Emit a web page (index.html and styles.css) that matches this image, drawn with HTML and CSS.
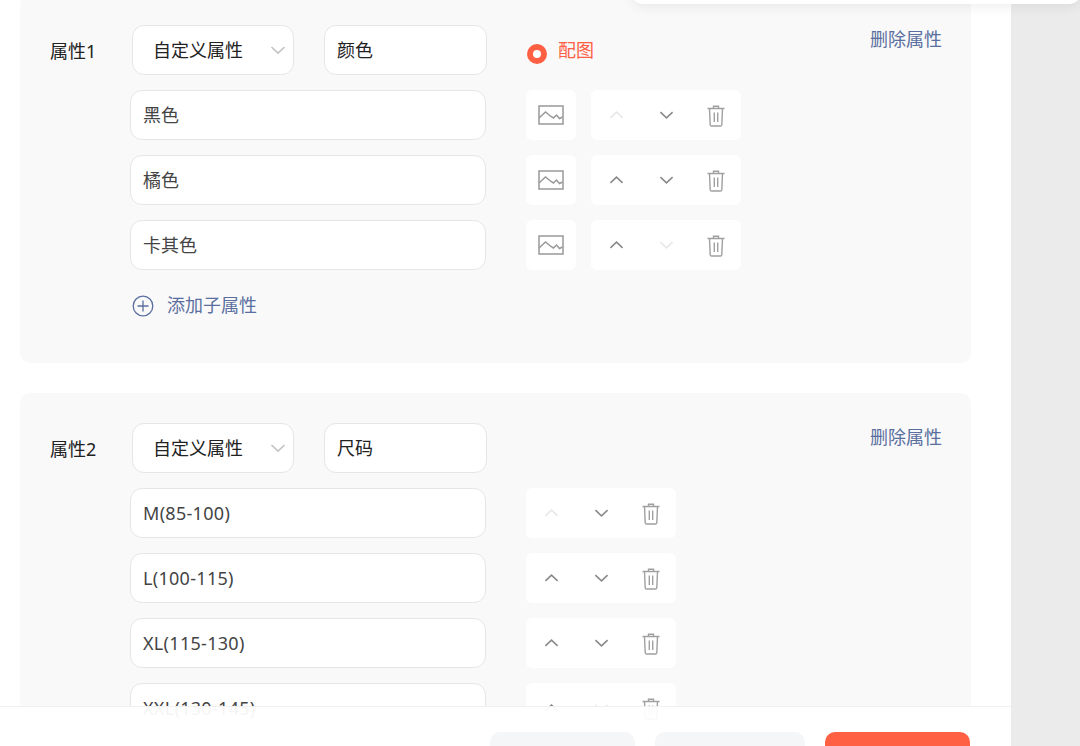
FILE: index.html
```html
<!DOCTYPE html>
<html lang="zh-CN">
<head>
<meta charset="utf-8">
<title>属性</title>
<link rel="stylesheet" href="styles.css">
</head>
<body>
<svg class="defs" width="0" height="0" aria-hidden="true">
  <symbol id="i-up" viewBox="0 0 16 10"><path d="M1.5 8 8 2l6.500 6" fill="none" stroke="currentColor" stroke-width="1.700"/></symbol>
  <symbol id="i-down" viewBox="0 0 16 10"><path d="M1.500 2 8 8l6.500-6" fill="none" stroke="currentColor" stroke-width="1.700"/></symbol>
  <symbol id="i-trash" viewBox="0 0 18 22"><path d="M.5 3.500h17M6.500 3.500V1.200h5v2.300M2.500 3.500l.7 16.200q.1 1.300 1.400 1.300h8.800q1.300 0 1.400-1.300l.7-16.200M7.300 7.500v9.500M10.700 7.500v9.500" fill="none" stroke="currentColor" stroke-width="1.400"/></symbol>
  <symbol id="i-img" viewBox="0 0 26 20"><rect x="1" y="1" width="24" height="18" fill="none" stroke="currentColor" stroke-width="1.500"/><path d="M1 13 7.500 7l5.500 4.500 2.500 1.500 3-3 3 3.500 3-1.500" fill="none" stroke="currentColor" stroke-width="1.500"/></symbol>
</svg>
<div class="app">
  <main class="main">
    <section class="card">
      <div class="head">
        <div class="label">属性1</div>
        <div class="select">自定义属性<svg class="caret"><use href="#i-down"/></svg></div>
        <div class="name">颜色</div>
        <div class="radio"><span class="dot"></span>配图</div>
        <a class="del">删除属性</a>
      </div>
      <div class="row">
        <div class="field">黑色</div>
        <div class="imgbtn"><svg class="ico-img"><use href="#i-img"/></svg></div>
        <div class="actions">
          <span class="act off"><svg class="chev"><use href="#i-up"/></svg></span>
          <span class="act"><svg class="chev"><use href="#i-down"/></svg></span>
          <span class="act tr"><svg class="trash"><use href="#i-trash"/></svg></span>
        </div>
      </div>
      <div class="row">
        <div class="field">橘色</div>
        <div class="imgbtn"><svg class="ico-img"><use href="#i-img"/></svg></div>
        <div class="actions">
          <span class="act"><svg class="chev"><use href="#i-up"/></svg></span>
          <span class="act"><svg class="chev"><use href="#i-down"/></svg></span>
          <span class="act tr"><svg class="trash"><use href="#i-trash"/></svg></span>
        </div>
      </div>
      <div class="row">
        <div class="field">卡其色</div>
        <div class="imgbtn"><svg class="ico-img"><use href="#i-img"/></svg></div>
        <div class="actions">
          <span class="act"><svg class="chev"><use href="#i-up"/></svg></span>
          <span class="act off"><svg class="chev"><use href="#i-down"/></svg></span>
          <span class="act tr"><svg class="trash"><use href="#i-trash"/></svg></span>
        </div>
      </div>
      <div class="add">
        <svg class="plus" viewBox="0 0 22 22"><circle cx="11" cy="11" r="9.800" fill="none" stroke="currentColor" stroke-width="1.300"/><path d="M5.500 11h11M11 5.500v11" fill="none" stroke="currentColor" stroke-width="1.300"/></svg>
        添加子属性
      </div>
    </section>
    <section class="card">
      <div class="head">
        <div class="label">属性2</div>
        <div class="select">自定义属性<svg class="caret"><use href="#i-down"/></svg></div>
        <div class="name">尺码</div>
        <a class="del">删除属性</a>
      </div>
      <div class="row">
        <div class="field latin">M(85-100)</div>
        <div class="actions">
          <span class="act off"><svg class="chev"><use href="#i-up"/></svg></span>
          <span class="act"><svg class="chev"><use href="#i-down"/></svg></span>
          <span class="act tr"><svg class="trash"><use href="#i-trash"/></svg></span>
        </div>
      </div>
      <div class="row">
        <div class="field latin">L(100-115)</div>
        <div class="actions">
          <span class="act"><svg class="chev"><use href="#i-up"/></svg></span>
          <span class="act"><svg class="chev"><use href="#i-down"/></svg></span>
          <span class="act tr"><svg class="trash"><use href="#i-trash"/></svg></span>
        </div>
      </div>
      <div class="row">
        <div class="field latin">XL(115-130)</div>
        <div class="actions">
          <span class="act"><svg class="chev"><use href="#i-up"/></svg></span>
          <span class="act"><svg class="chev"><use href="#i-down"/></svg></span>
          <span class="act tr"><svg class="trash"><use href="#i-trash"/></svg></span>
        </div>
      </div>
      <div class="row">
        <div class="field latin">XXL(130-145)</div>
        <div class="actions">
          <span class="act"><svg class="chev"><use href="#i-up"/></svg></span>
          <span class="act off"><svg class="chev"><use href="#i-down"/></svg></span>
          <span class="act tr"><svg class="trash"><use href="#i-trash"/></svg></span>
        </div>
      </div>
    </section>
    <footer class="footer">
      <span class="btn b1"></span>
      <span class="btn b2"></span>
      <span class="btn primary"></span>
    </footer>
  </main>
  <aside class="side"></aside>
  <div class="popup"></div>
</div>
</body>
</html>
```
FILE: styles.css
```css
* { box-sizing: border-box; }
html, body { margin: 0; height: 100%; overflow: hidden; background: #fff; }
body { font-family: "Noto Sans", "Noto Sans CJK SC", sans-serif; font-size: 18px; color: #333; }
.defs { position: absolute; }
.app { display: flex; height: 746px; overflow: hidden; }
.main { position: relative; width: 1011px; height: 746px; overflow: hidden; padding-left: 20px; flex: none; }
.side { flex: 1; background: #ebebeb; }
.popup { position: absolute; left: 632px; right: 0; top: -40px; height: 44px; background: #fff; border-radius: 10px; box-shadow: 0 2px 12px rgba(60, 70, 90, .1); }
.card { width: 951px; margin-top: -5px; margin-bottom: 35px; padding: 30px 29px 38px 30px; background: #f9f9f9; border-radius: 10px; }
.head { display: flex; align-items: center; height: 50px; margin-bottom: 15px; }
.label { width: 82px; margin-top: 2px; color: #222; line-height: 50px; }
.select { display: flex; align-items: center; justify-content: space-between; width: 162px; height: 50px; padding: 0 7px 0 20px; line-height: 46px; background: #fff; border: 1px solid #e6e6e6; border-radius: 12px; color: #222; }
.caret { width: 16px; height: 10px; color: #c4c4c4; }
.name { width: 163px; height: 50px; margin-left: 30px; padding-left: 12px; line-height: 48px; background: #fff; border: 1px solid #e6e6e6; border-radius: 12px; color: #222; }
.radio { display: flex; align-items: center; margin-left: 40px; color: #ff6044; line-height: 46px; }
.dot { width: 20px; height: 20px; margin: 7px 11px 0 0; border: 6px solid #ff6044; border-radius: 50%; background: #fff; }
.del { align-self: flex-start; margin-left: auto; margin-top: 2px; line-height: 24px; color: #5a6f9f; }
.row { display: flex; align-items: center; margin: 0 0 15px 80px; }
.field { width: 356px; height: 50px; padding-left: 12px; margin-right: 40px; line-height: 48px; background: #fff; border: 1px solid #e6e6e6; border-radius: 12px; color: #444; }
.latin { letter-spacing: .3px; }
.imgbtn { display: flex; align-items: center; justify-content: center; width: 50px; height: 50px; margin-right: 15px; background: #fff; border-radius: 6px; color: #999; }
.ico-img { width: 26px; height: 20px; }
.actions { display: flex; width: 150px; height: 50px; background: #fff; border-radius: 6px; }
.act { display: flex; align-items: center; justify-content: center; width: 50px; height: 50px; color: #8a8a8a; padding-left: 1px; }
.act.off { color: #e8e8e8; }
.act.tr { color: #a0a0a0; padding: 1px 0 0; }
.chev { width: 15px; height: 10px; }
.trash { width: 18px; height: 22px; }
.add { display: flex; align-items: center; height: 40px; margin-left: 82px; color: #5a6f9f; line-height: 38px; }
.plus { width: 22px; height: 22px; margin: 2px 13px 0 0; }
.footer { position: absolute; left: 0; right: 0; top: 706px; height: 40px; padding: 25px 41px 0 0; display: flex; justify-content: flex-end; gap: 20px; background: rgba(255, 255, 255, .94); border-top: 1px solid #f0f0f0; }
.btn { height: 40px; border-radius: 10px; background: #f5f6f8; }
.b1 { width: 145px; }
.b2 { width: 150px; }
.primary { width: 145px; background: #ff6044; }
```
